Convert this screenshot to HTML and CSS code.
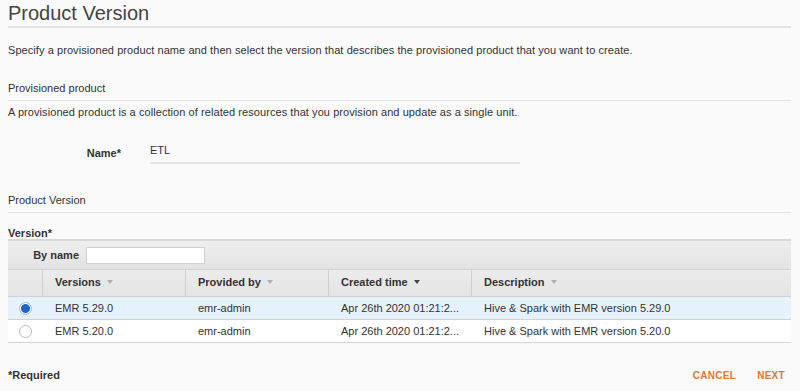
FILE: index.html
```html
<!DOCTYPE html>
<html lang="en">
<head>
  <meta charset="UTF-8" />
  <title>Product Version</title>
  <link rel="stylesheet" href="styles.css">
</head>
<body>
  <h1 class="page-title">Product Version</h1>
  <p class="intro">Specify a provisioned product name and then select the version that describes the provisioned product that you want to create.</p>

  <h2 class="section-title">Provisioned product</h2>
  <p class="section-desc">A provisioned product is a collection of related resources that you provision and update as a single unit.</p>

  <div class="field-row">
    <label class="field-label">Name*</label>
    <div class="field-value">ETL</div>
  </div>

  <h2 class="section-title">Product Version</h2>

  <div class="version-label">Version*</div>
  <div class="table">
    <div class="toolbar">
      <span class="filter-label">By name</span>
      <input class="filter-input" type="text">
    </div>
    <div class="row head">
      <div class="cell check"></div>
      <div class="cell">Versions <span class="sort"></span></div>
      <div class="cell">Provided by <span class="sort"></span></div>
      <div class="cell">Created time <span class="sort active"></span></div>
      <div class="cell last">Description <span class="sort"></span></div>
    </div>
    <div class="row selected">
      <div class="cell check"><span class="radio on"></span></div>
      <div class="cell">EMR 5.29.0</div>
      <div class="cell">emr-admin</div>
      <div class="cell">Apr 26th 2020 01:21:2...</div>
      <div class="cell last">Hive &amp; Spark with EMR version 5.29.0</div>
    </div>
    <div class="row">
      <div class="cell check"><span class="radio"></span></div>
      <div class="cell">EMR 5.20.0</div>
      <div class="cell">emr-admin</div>
      <div class="cell">Apr 26th 2020 01:21:2...</div>
      <div class="cell last">Hive &amp; Spark with EMR version 5.20.0</div>
    </div>
  </div>

  <div class="footer">
    <span class="required">*Required</span>
    <div class="actions">
      <button class="link-btn">CANCEL</button>
      <button class="link-btn">NEXT</button>
    </div>
  </div>
</body>
</html>
```

FILE: styles.css
```css
body {
  margin: 0;
  padding: 0 9px 0 8px;
  background: #fafafa;
  color: #333;
  font-family: "Liberation Sans", Arial, sans-serif;
  font-size: 11px;
}
.page-title {
  margin: 0;
  padding: 4px 0 3px;
  font-size: 20px;
  font-weight: normal;
  color: #444;
  border-bottom: 2px solid #e3e3e3;
  line-height: 19px;
}
.intro {
  margin: 16px 0 0;
  line-height: 13px;
  letter-spacing: 0.07px;
}
.section-title {
  margin: 25px 0 0;
  padding-bottom: 5px;
  font-size: 11px;
  font-weight: normal;
  line-height: 13px;
  border-bottom: 1px solid #e3e3e3;
}
.section-desc {
  margin: 5px 0 0;
  line-height: 13px;
  letter-spacing: 0.07px;
}
.field-row {
  display: flex;
  align-items: center;
  margin-top: 22px;
}
.field-label {
  width: 113px;
  text-align: right;
  font-weight: bold;
}
.field-value {
  margin-left: 29px;
  width: 370px;
  padding: 3px 0 5px;
  border-bottom: 2px solid #e3e3e3;
  line-height: 13px;
}
.field-row + .section-title {
  margin-top: 30px;
}
.version-label {
  margin-top: 14px;
  font-weight: bold;
  line-height: 13px;
}
.table {
  margin-top: -1px;
  border-bottom: 1px solid #d5d5d5;
}
.toolbar {
  display: flex;
  align-items: center;
  height: 28px;
  border-top: 2px solid #d8d8d8;
  background: linear-gradient(#efefef, #e3e3e3);
}
.filter-label {
  width: 71px;
  text-align: right;
  font-weight: bold;
}
.filter-input {
  margin: 0 0 0 7px;
  width: 119px;
  height: 17px;
  padding: 0;
  border: 1px solid #d0d0d0;
  background: #fff;
  box-sizing: border-box;
}
.row {
  display: grid;
  grid-template-columns: 35px 143px 143px 143px 1fr;
  height: 22px;
  border-top: 1px solid #d2d2d2;
  background: #fff;
}
.row.head {
  height: 26px;
  background: linear-gradient(#ececec, #e4e4e4);
  font-weight: bold;
}
.row.head .cell {
  padding-bottom: 3px;
}
.row.selected {
  background: #e6f2fd;
}
.cell {
  display: flex;
  align-items: center;
  padding-left: 12px;
  white-space: nowrap;
  overflow: hidden;
}
.row.head .cell {
  border-right: 1px solid #cfcfcf;
}
.row.head .cell.last {
  border-right: none;
}
.cell.check {
  padding-left: 11px;
}
.sort {
  display: inline-block;
  margin-left: 6px;
  border-left: 3px solid transparent;
  border-right: 3px solid transparent;
  border-top: 4px solid #b0b0b0;
}
.sort.active {
  border-top-color: #444;
}
.radio {
  display: inline-block;
  width: 11px;
  height: 11px;
  border: 1px solid #b8b8b8;
  border-radius: 50%;
  background: #fff;
}
.radio.on {
  border-color: #9db8d8;
  background: radial-gradient(circle, #1e64c8 4px, #fff 5px);
}
.footer {
  display: flex;
  justify-content: space-between;
  align-items: center;
  margin-top: 26px;
}
.required {
  font-weight: bold;
}
.actions {
  display: flex;
  gap: 21px;
  margin-right: 6px;
}
.link-btn {
  border: none;
  background: none;
  padding: 0;
  font-family: inherit;
  font-size: 10px;
  font-weight: bold;
  color: #e0782f;
  letter-spacing: 0.3px;
  cursor: pointer;
}
```
